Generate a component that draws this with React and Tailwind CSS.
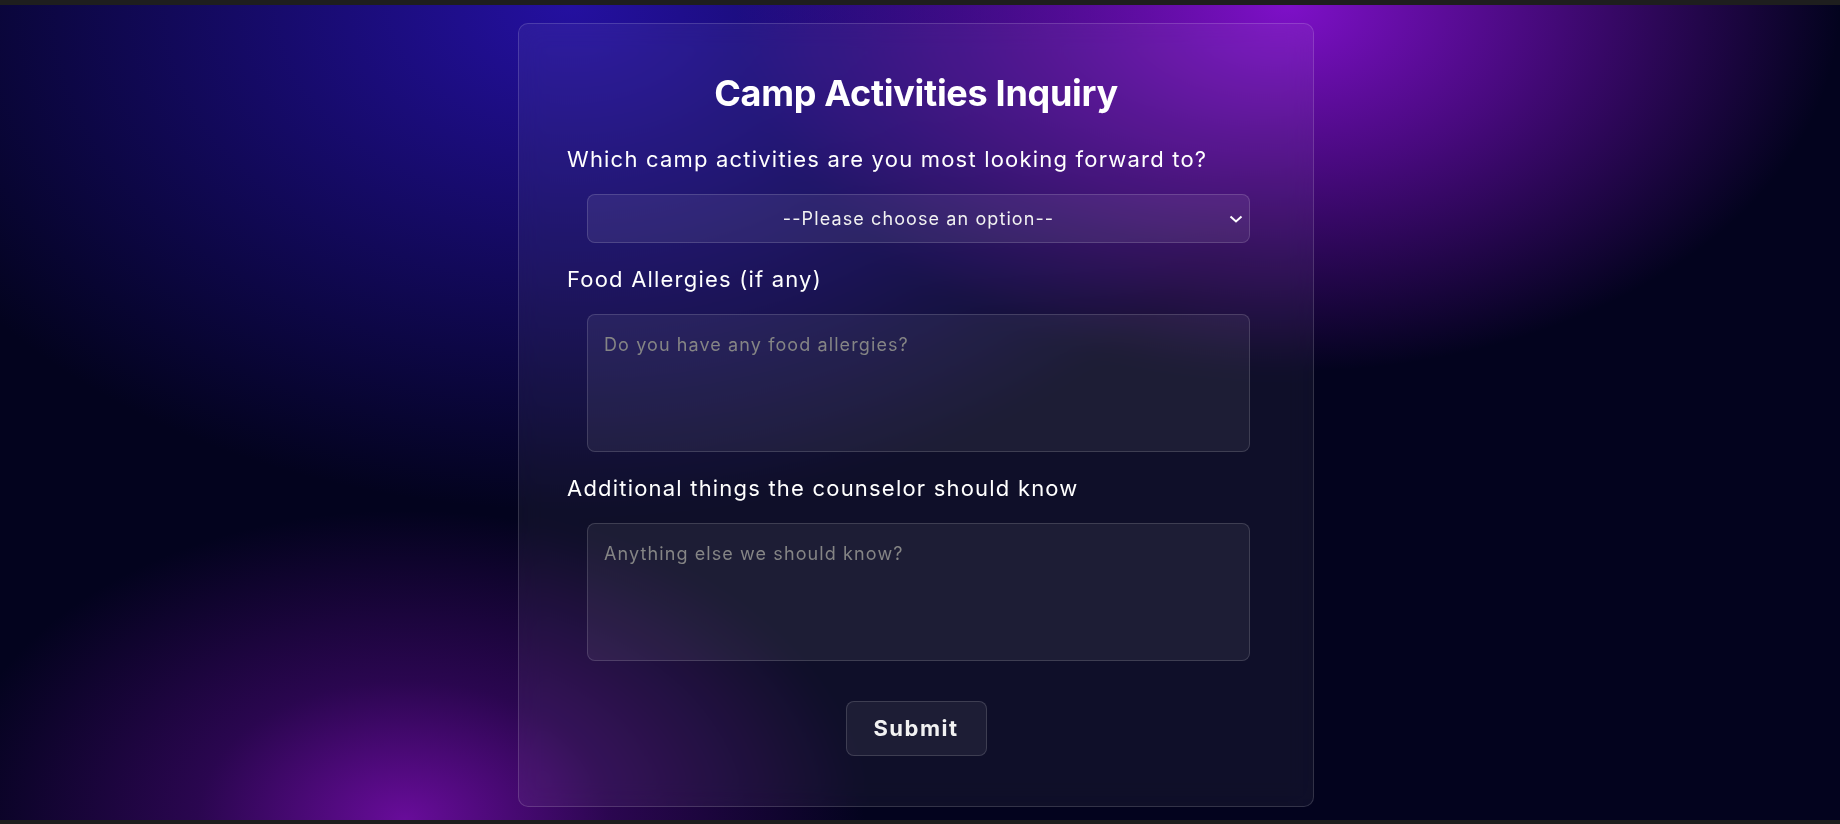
import React from 'react'

const font = { fontFamily: '"Inter", "Noto Sans", sans-serif' }

const App = () => {
  return (
    <div className="h-[824px] w-full flex flex-col bg-[#1e1e1e] overflow-hidden" style={font}>
      {/* top strip */}
      <div className="h-[5px] shrink-0 bg-[#1e1e1e]" />

      {/* page background */}
      <main className="flex-1 flex justify-center pr-2 pt-[18px] bg-[#03031e] bg-[image:radial-gradient(30%_45%_at_70%_0%,#7e10c8_0%,rgba(118,14,190,0.6)_45%,transparent_100%),radial-gradient(40%_62%_at_31%_0%,#2410a0_0%,rgba(36,16,160,0.6)_40%,transparent_100%),radial-gradient(25%_38%_at_22%_100%,#680c9a_0%,rgba(90,10,140,0.45)_45%,transparent_100%)]">
        {/* form card */}
        <div className="w-[796px] h-[784px] rounded-[10px] border border-white/15 bg-white/[0.05] backdrop-blur-md px-12 pt-12">
          <h1 className="text-center text-[36px] leading-[1.2] font-bold tracking-[-0.3px] text-white">Camp Activities Inquiry</h1>

          <form className="mt-7 flex flex-col" onSubmit={(e) => e.preventDefault()}>
            <label className="text-[22px] leading-[33px] tracking-[1.2px] text-white">Which camp activities are you most looking forward to?</label>
            <div className="relative mt-[18px] ml-5 w-[95%]">
              <select className="w-full h-[49px] appearance-none rounded-lg border border-white/15 bg-white/[0.07] text-center [text-align-last:center] text-[18px] tracking-[1.1px] text-[#f2f2f2] outline-none">
                <option className="bg-[#1c1a3a]">--Please choose an option--</option>
                <option className="bg-[#1c1a3a]">Hiking</option>
                <option className="bg-[#1c1a3a]">Canoeing</option>
                <option className="bg-[#1c1a3a]">Campfire</option>
              </select>
              <svg className="pointer-events-none absolute right-[7px] top-[21px]" width="14" height="8" viewBox="0 0 14 8" fill="none">
                <path d="M1.5 1.5L7 6.5L12.5 1.5" stroke="white" strokeWidth="2" />
              </svg>
            </div>

            <label className="mt-5 text-[22px] leading-[33px] tracking-[1.2px] text-white">Food Allergies (if any)</label>
            <textarea
              className="mt-[18px] ml-5 w-[95%] h-[138px] resize-none rounded-lg border border-white/15 bg-white/[0.06] p-4 text-[18px] leading-[28px] tracking-[1.1px] text-white placeholder:text-[#858585] outline-none"
              placeholder="Do you have any food allergies?"
            />

            <label className="mt-5 text-[22px] leading-[33px] tracking-[1.2px] text-white">Additional things the counselor should know</label>
            <textarea
              className="mt-[18px] ml-5 w-[95%] h-[138px] resize-none rounded-lg border border-white/15 bg-white/[0.06] p-4 text-[18px] leading-[28px] tracking-[1.1px] text-white placeholder:text-[#858585] outline-none"
              placeholder="Anything else we should know?"
            />

            <button
              type="submit"
              className="mt-10 self-center w-[141px] h-[55px] rounded-lg border border-white/15 bg-white/[0.06] text-[22px] font-bold tracking-[1.5px] text-[#f2f2f2]"
            >
              Submit
            </button>
          </form>
        </div>
      </main>

      {/* bottom strip */}
      <div className="h-[4px] shrink-0 bg-[#1e1e1e]" />
    </div>
  )
}

export default App
